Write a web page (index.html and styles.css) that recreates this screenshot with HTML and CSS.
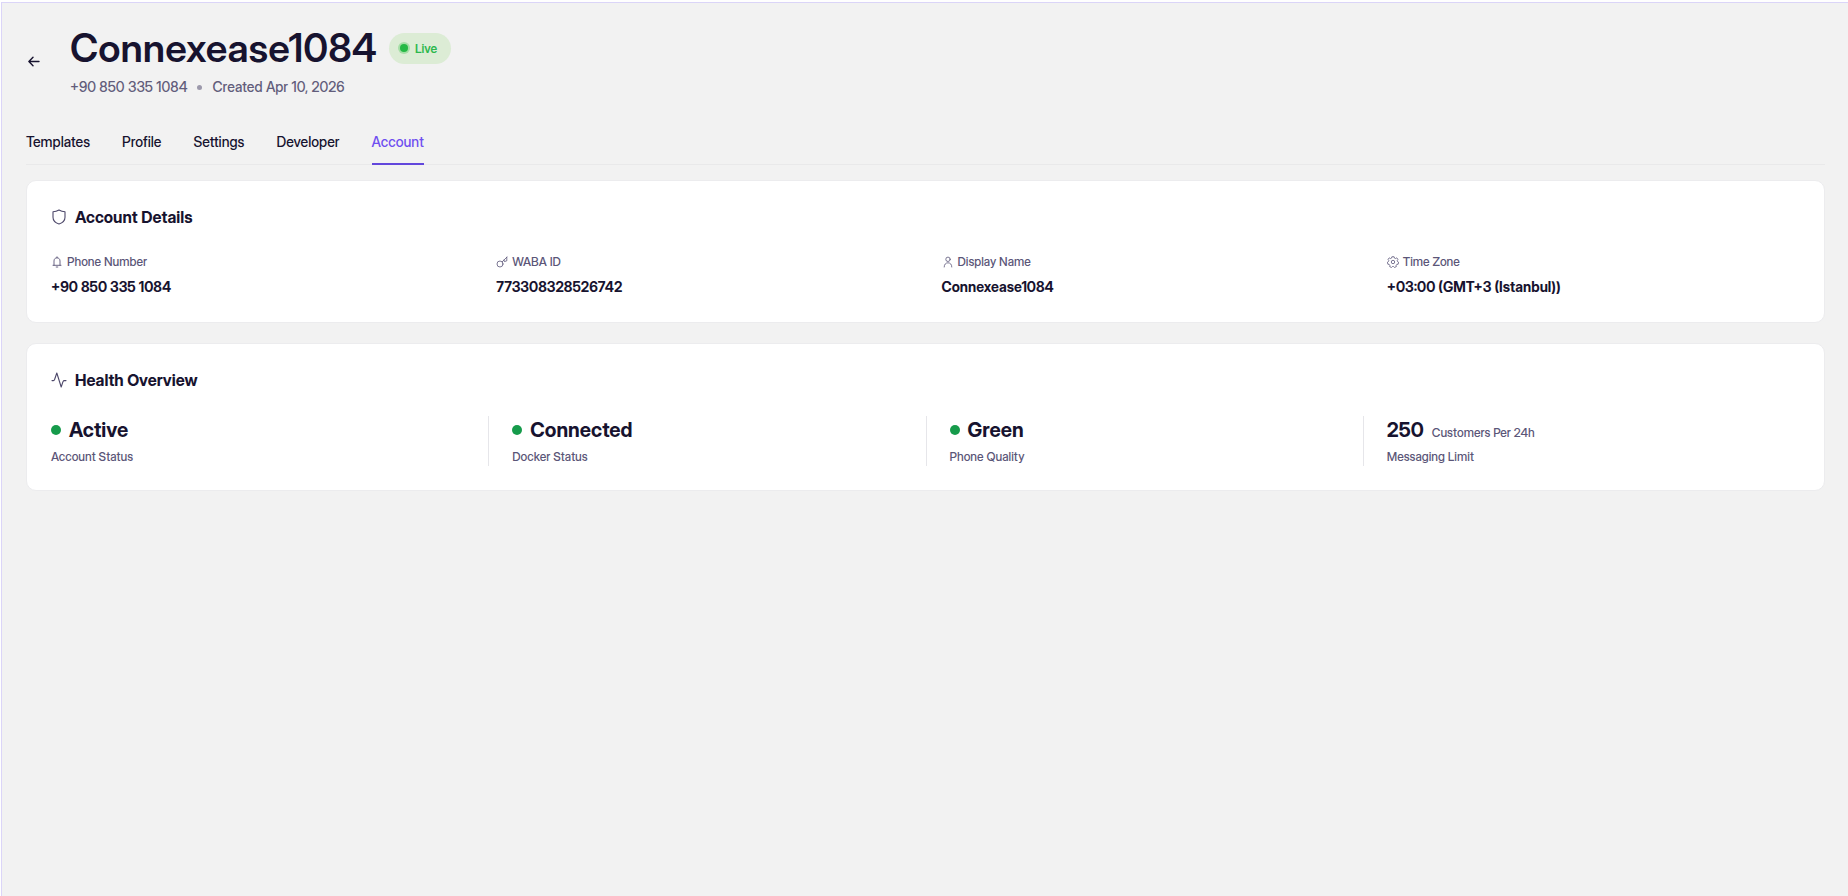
FILE: index.html
```html
<!DOCTYPE html>
<html lang="en">
<head>
<meta charset="utf-8">
<title>Connexease1084</title>
<link rel="stylesheet" href="styles.css">
</head>
<body>
<main class="page">
  <header class="header">
    <button class="back" type="button" aria-label="Back">
      <svg width="12" height="12" viewBox="0 0 12 12" fill="none" stroke="currentColor" stroke-width="1.4" stroke-linecap="round" stroke-linejoin="round"><path d="M11 5.500H1.200M5 1.300.9 5.500 5 9.700"/></svg>
    </button>
    <div class="heading">
      <div class="title-row">
        <h1 class="title">Connexease1084</h1>
        <span class="badge"><span class="pulse"></span>Live</span>
      </div>
      <p class="meta"><span>+90 850 335 1084</span><span class="separator"></span><span>Created Apr 10, 2026</span></p>
    </div>
  </header>

  <nav class="tabs">
    <a class="tab" href="#templates">Templates</a>
    <a class="tab" href="#profile">Profile</a>
    <a class="tab" href="#settings">Settings</a>
    <a class="tab" href="#developer">Developer</a>
    <a class="tab active" href="#account" aria-current="page">Account</a>
  </nav>

  <div class="cards">
    <section class="card">
      <h2 class="card-title">
        <svg width="16" height="16" viewBox="0 0 16 16" fill="none" stroke="currentColor" stroke-width="1.1" stroke-linejoin="round"><path d="M8 1c1.8 1.1 3.8 1.7 6 1.8v5.4c0 3.200-2.300 5.600-6 6.800-3.700-1.200-6-3.600-6-6.800V2.800C4.200 2.700 6.200 2.100 8 1z"/></svg>
        Account Details
      </h2>
      <dl class="details">
        <div>
          <dt class="label"><svg width="12" height="12" viewBox="0 0 12 12" fill="none" stroke="currentColor" stroke-width="0.9" stroke-linecap="round" stroke-linejoin="round"><path d="M2 9.300h8M3 9.200V5c0-1.900 1.200-3.200 3-3.200S9 3.100 9 5v4.200M6 .8v1M5.200 11h1.600"/></svg>Phone Number</dt>
          <dd class="value">+90 850 335 1084</dd>
        </div>
        <div>
          <dt class="label"><svg width="12" height="12" viewBox="0 0 12 12" fill="none" stroke="currentColor" stroke-width="0.8" stroke-linecap="round" stroke-linejoin="round"><circle cx="4" cy="8" r="3"/><path d="M6.200 5.800 11 1M8 4l.4 1.600L10.800 4.800V1.200"/></svg>WABA ID</dt>
          <dd class="value">773308328526742</dd>
        </div>
        <div>
          <dt class="label"><svg width="12" height="12" viewBox="0 0 12 12" fill="none" stroke="currentColor" stroke-width="0.8" stroke-linecap="round"><circle cx="6" cy="3.300" r="2.200"/><path d="M2.200 11c0-2.600 1.500-4.200 3.800-4.200S9.800 8.400 9.800 11"/></svg>Display Name</dt>
          <dd class="value">Connexease1084</dd>
        </div>
        <div>
          <dt class="label"><svg width="12" height="12" viewBox="0 0 24 24" fill="none" stroke="currentColor" stroke-width="1.600" stroke-linejoin="round"><path d="M9.800 1.500h4.400l.7 2.700 2 .9 2.600-1.400 2.400 3-1.400 2.200.6 2.200 2 1.300-.8 4-2.700.4-1.300 1.800.3 2.700-3.600 1.600-1.900-1.900h-2.200l-1.900 1.900-3.600-1.600.3-2.700-1.300-1.800-2.700-.4-.8-4 2-1.300.6-2.200-1.400-2.200 2.400-3 2.600 1.400 2-.9z"/><circle cx="12" cy="12" r="3.400"/></svg>Time Zone</dt>
          <dd class="value">+03:00 (GMT+3 (Istanbul))</dd>
        </div>
      </dl>
    </section>

    <section class="card">
      <h2 class="card-title">
        <svg width="16" height="16" viewBox="0 0 16 16" fill="none" stroke="currentColor" stroke-width="1.1" stroke-linecap="round" stroke-linejoin="round"><path d="M1 8.600h1.400c.6 0 .9-.3 1.100-.8L5.800 1l4.400 14 1.800-5.400c.3-.7.6-1 1.300-1H15"/></svg>
        Health Overview
      </h2>
      <div class="health">
        <div class="stat"><div class="stat-value"><span class="dot"></span>Active</div><div class="label">Account Status</div></div>
        <div class="stat"><div class="stat-value"><span class="dot"></span>Connected</div><div class="label">Docker Status</div></div>
        <div class="stat"><div class="stat-value"><span class="dot"></span>Green</div><div class="label">Phone Quality</div></div>
        <div class="stat"><div class="stat-value with-unit">250<span class="label">Customers Per 24h</span></div><div class="label">Messaging Limit</div></div>
      </div>
    </section>
  </div>
</main>
</body>
</html>
```
FILE: styles.css
```css
* { box-sizing: border-box; }

body {
  margin: 0;
  padding: 2px 0 0 1px;
  min-height: 100vh;
  display: flex;
  background: #fff;
  color: #17132f;
  font-family: "Inter Display", Inter, "Liberation Sans", sans-serif;
  font-size: 14px;
  font-weight: 500;
}

h1, h2, p, dl, dd { margin: 0; }

svg { flex: none; }

.page {
  flex: 1;
  padding: 24px 23px 24px 24px;
  background: #f2f2f2;
  border: 1px solid #dbd5f8;
  border-width: 1px 0 0 1px;
}

.header {
  display: flex;
  align-items: center;
  gap: 28px;
}

.back {
  display: flex;
  padding: 2px;
  border: 0;
  background: none;
  color: #17132f;
}

.title-row {
  display: flex;
  align-items: center;
  gap: 12px;
}

.title {
  font-size: 39px;
  line-height: 42px;
  font-weight: 600;
}

.badge {
  display: flex;
  align-items: center;
  gap: 6px;
  height: 31px;
  padding: 0 14px 0 10px;
  border-radius: 16px;
  background: #dcecd5;
  color: #2db84d;
  font-size: 12px;
  font-weight: 600;
}

.pulse {
  width: 8px;
  height: 8px;
  margin: 1px;
  border-radius: 50%;
  background: #25b945;
  box-shadow: 0 0 0 2px #a5dea6;
}

.meta {
  display: flex;
  align-items: center;
  gap: 10px;
  margin-top: 9px;
  color: #625d7b;
  font-size: 14px;
  line-height: 18px;
}

.separator {
  width: 5px;
  height: 5px;
  border-radius: 50%;
  background: #9c99ab;
}

.tabs {
  display: flex;
  gap: 32px;
  margin-top: 32px;
  border-bottom: 1px solid #e9e9ea;
}

.tab {
  margin-bottom: -1px;
  padding: 4px 0 11px;
  border-bottom: 2px solid transparent;
  color: #17132f;
  font-size: 14px;
  line-height: 20px;
  text-decoration: none;
}

.tab.active {
  border-color: #6247dc;
  color: #6f4ff0;
}

.cards {
  display: grid;
  gap: 20px;
  margin-top: 15px;
}

.card {
  padding: 24px;
  background: #fff;
  border: 1px solid #ececee;
  border-radius: 10px;
}

.card-title {
  display: flex;
  align-items: center;
  gap: 8px;
  margin-bottom: 24px;
  font-size: 16px;
  line-height: 24px;
  font-weight: 700;
}

.card-title svg { color: #4d486a; }

.details {
  display: grid;
  grid-template-columns: repeat(4, 1fr);
  gap: 32px;
}

.label {
  display: flex;
  align-items: center;
  gap: 4px;
  color: #5b5678;
  font-size: 12px;
  line-height: 18px;
  font-weight: 500;
}

.value {
  margin-top: 5px;
  font-size: 14px;
  line-height: 22px;
  font-weight: 700;
}

.health {
  display: grid;
  grid-template-columns: repeat(4, 1fr);
}

.stat + .stat {
  padding-left: 23px;
  border-left: 1px solid #e6e6ea;
}

.stat-value {
  display: flex;
  align-items: center;
  gap: 8px;
  margin-bottom: 4px;
  font-size: 20px;
  line-height: 28px;
  font-weight: 700;
}

.with-unit { align-items: baseline; }

.dot {
  width: 10px;
  height: 10px;
  border-radius: 50%;
  background: #169b4b;
}
```
